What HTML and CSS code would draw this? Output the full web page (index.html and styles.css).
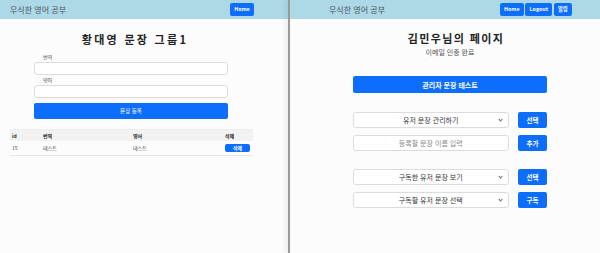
FILE: index.html
```html
<!DOCTYPE html>
<html lang="ko">
<head>
    <meta charset="UTF-8">
    <meta name="viewport" content="width=device-width, initial-scale=1.0">
    <title>무식한 영어 공부</title>
    <link rel="stylesheet" href="styles.css">
</head>
<body>
    <div class="pane pane-left">
        <header class="topbar topbar-left">
            <span class="brand">무식한 영어 공부</span>
            <div class="nav">
                <button class="btn btn-nav">Home</button>
            </div>
        </header>
        <main class="group">
            <h1 class="title">황대영 문장 그룹1</h1>
            <form class="add-form">
                <label for="kor">번역</label>
                <input type="text" id="kor">
                <label for="eng">영어</label>
                <input type="text" id="eng">
                <button type="button" class="btn btn-wide">문장 등록</button>
            </form>
            <table class="sentence-table">
                <thead>
                    <tr>
                        <th class="c-id">id</th>
                        <th class="c-kor">번역</th>
                        <th class="c-eng">영어</th>
                        <th class="c-del">삭제</th>
                    </tr>
                </thead>
                <tbody>
                    <tr>
                        <td>15</td>
                        <td>테스트</td>
                        <td>테스트</td>
                        <td><button class="btn btn-del">삭제</button></td>
                    </tr>
                </tbody>
            </table>
        </main>
    </div>
    <div class="divider"></div>
    <div class="pane pane-right">
        <header class="topbar topbar-right">
            <span class="brand">무식한 영어 공부</span>
            <div class="nav">
                <button class="btn btn-nav">Home</button>
                <button class="btn btn-nav">Logout</button>
                <button class="btn btn-nav">알림</button>
            </div>
        </header>
        <main class="mypage">
            <h1 class="title">김민우님의 페이지</h1>
            <p class="status">이메일 인증 완료</p>
            <button class="btn btn-admin">관리자 문장 테스트</button>

            <div class="row first">
                <div class="select">유저 문장 관리하기<span class="chev"></span></div>
                <button class="btn btn-side">선택</button>
            </div>
            <div class="row">
                <input type="text" class="field" placeholder="등록할 문장 이름 입력">
                <button class="btn btn-side">추가</button>
            </div>

            <div class="row first">
                <div class="select">구독한 유저 문장 보기<span class="chev"></span></div>
                <button class="btn btn-side">선택</button>
            </div>
            <div class="row">
                <div class="select">구독할 유저 문장 선택<span class="chev"></span></div>
                <button class="btn btn-side">구독</button>
            </div>
        </main>
    </div>
</body>
</html>
```

FILE: styles.css
```css
* {
    box-sizing: border-box;
}

body {
    margin: 0;
    width: 600px;
    height: 253px;
    display: flex;
    overflow: hidden;
    font-family: "Noto Sans CJK KR", "Noto Sans", sans-serif;
    background-color: #fcfcfd;
    color: #222;
}

.pane {
    height: 253px;
}

.pane-left {
    width: 288px;
}

.pane-right {
    flex: 1;
}

.divider {
    width: 2px;
    background-color: #9a9a9a;
    box-shadow: -2px 0 4px rgba(0, 0, 0, 0.12);
}

.topbar {
    height: 19px;
    background-color: #add8e6;
    display: flex;
    align-items: center;
    justify-content: space-between;
}

.topbar-left {
    padding: 0 34px 0 10px;
}

.topbar-right {
    padding: 0 28px 0 39px;
}

.brand {
    font-size: 8px;
    color: #4a5560;
}

.nav {
    display: flex;
    gap: 1.5px;
}

.btn {
    background-color: #0d6efd;
    color: #fff;
    border: none;
    border-radius: 2px;
    font-family: inherit;
    cursor: pointer;
    padding: 0;
}

.btn-nav {
    height: 12.5px;
    padding: 0 4.3px;
    font-size: 5.3px;
    font-weight: bold;
    line-height: 12.5px;
}

.title {
    margin: 0;
    text-align: center;
    font-size: 11px;
    line-height: 16px;
    font-weight: bold;
    letter-spacing: 2.3px;
    color: #222;
}

/* left: sentence group */
.group {
    padding-top: 12px;
}

.group .title {
    padding-left: 22px;
    padding-right: 40px;
}

.add-form {
    margin: 4.5px 0 0 34px;
    width: 194px;
    display: flex;
    flex-direction: column;
}

.add-form label {
    font-size: 5px;
    color: #444;
    margin-left: 9px;
    height: 10px;
    line-height: 10px;
}

.add-form input {
    height: 13px;
    border: 1px solid #dcdcdc;
    border-radius: 3px;
    background: #fff;
}

.btn-wide {
    margin-top: 5.5px;
    height: 16px;
    font-size: 5.5px;
}

.sentence-table {
    margin: 10px 0 0 10px;
    width: 243px;
    border-collapse: collapse;
    font-size: 5px;
    border-top: 1px solid #ececec;
}

.sentence-table th,
.sentence-table td {
    text-align: left;
    padding: 0 2px;
}

.sentence-table th {
    height: 11px;
    background-color: #f2f2f3;
    font-weight: bold;
}

.sentence-table td {
    height: 15px;
    border-bottom: 1px solid #e6e6e6;
    color: #444;
}

.c-id { width: 31px; }
.c-kor { width: 90px; }
.c-eng { width: 92px; }

.btn-del {
    width: 25px;
    height: 8px;
    font-size: 5px;
    line-height: 8px;
    font-weight: bold;
}

/* right: my page */
.mypage {
    padding: 11px 53px 0 63px;
    display: flex;
    flex-direction: column;
}

.mypage .title {
    padding-left: 12px;
    letter-spacing: 1.4px;
}

.status {
    margin: 1px 0 0;
    height: 10px;
    line-height: 10px;
    text-align: center;
    font-size: 7px;
    color: #555;
}

.btn-admin {
    margin-top: 19px;
    height: 17px;
    font-size: 7px;
    font-weight: bold;
}

.row {
    display: flex;
    justify-content: space-between;
    margin-top: 7px;
}

.row.first {
    margin-top: 18.5px;
}

.select,
.field {
    width: 155.5px;
    height: 16px;
    border: 1px solid #dcdcdc;
    border-radius: 3px;
    background: #fff;
    font-size: 7px;
    font-family: inherit;
    color: #333;
}

.select {
    display: flex;
    align-items: center;
    justify-content: center;
    position: relative;
}

.field {
    text-align: center;
    padding: 0;
}

.field::placeholder {
    color: #888;
}

.chev {
    position: absolute;
    right: 6px;
    top: 5px;
    width: 3px;
    height: 3px;
    border-right: 1px solid #666;
    border-bottom: 1px solid #666;
    transform: rotate(45deg);
}

.btn-side {
    width: 29px;
    height: 16px;
    font-size: 6.5px;
    font-weight: bold;
}
```
